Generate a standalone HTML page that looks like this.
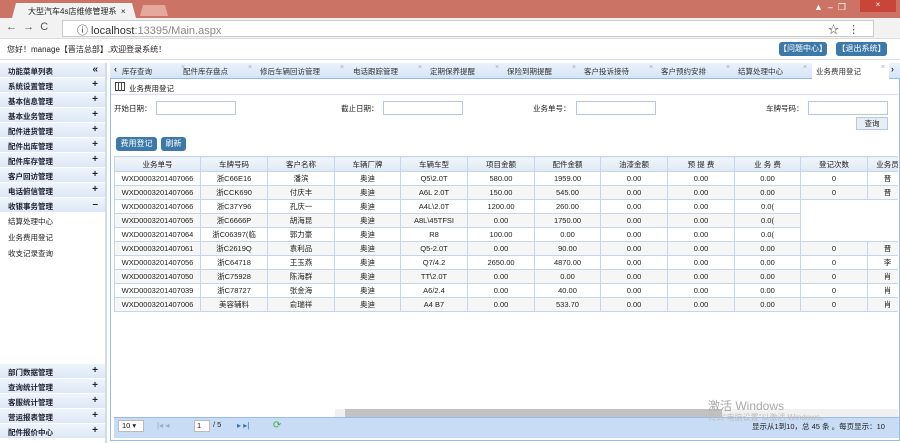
<!DOCTYPE html>
<html><head><meta charset="utf-8"><style>
*{margin:0;padding:0;box-sizing:border-box}
body{width:900px;height:443px;overflow:hidden;background:#fff;font-family:"Liberation Sans","Noto Sans CJK SC",sans-serif;font-size:8px;color:#222;position:relative}
.abs{position:absolute}
.top{left:0;top:0;width:900px;height:18px;background:#cb7364}
.tab{left:12px;top:3px;width:124px;height:15px;background:#f2f2f2;clip-path:polygon(4px 0,120px 0,124px 15px,0 15px);font-size:8px;padding:3px 0 0 16px}
.tab2{left:140px;top:5px;width:28px;height:11px;background:#e4a89c;clip-path:polygon(3px 0,25px 0,28px 11px,0 11px)}
.addr{left:0;top:18px;width:900px;height:21px;background:#f2f2f2;border-bottom:1px solid #ddd}
.url{left:62px;top:20px;width:812px;height:17px;background:#fff;border:1px solid #ccc;font-size:11px;padding:1px 0 0 14px;color:#333}
.hdr{left:0;top:40px;width:900px;height:20px;border-bottom:1px solid #ddd}
.btn{background:#3d79a8;color:#fff;border-radius:3px;font-size:8px;text-align:center;line-height:13px;height:14px}
.side{left:0;top:63px;width:107px;height:380px;border-right:2px solid #cfdcec}
.si{height:15px;background:linear-gradient(#eef4fc,#dce8f6);border-bottom:1px solid #fff;font-size:7.5px;padding:3px 0 0 8px;color:#223;position:relative;font-weight:bold}
.si b{position:absolute;right:7px;top:1px;font-size:10px}
.lk{height:16px;font-size:7.5px;padding:2px 0 0 8px}
.main{left:110px;top:63px;width:790px;height:378px;border:1px solid #99bbe8}
.tabs{left:110px;top:63px;width:790px;height:16px;background:linear-gradient(#eaf2fc,#d5e4f6);border-bottom:1px solid #99bbe8}
.t{position:absolute;top:3px;font-size:7.5px;color:#333}
.t i{font-style:normal;color:#aaa;position:absolute;top:-2px;font-size:7px}
table{border-collapse:collapse;position:absolute;left:114px;top:156px;font-size:7.5px;table-layout:fixed;width:793px}
td,th{border:1px solid #c5d5ea;height:14px;text-align:center;font-weight:normal;padding:0;white-space:nowrap;overflow:hidden}
th{background:linear-gradient(#f2f6fb,#dde8f5);height:15px}
tr:nth-child(odd) td{background:#f6f6f6}
input{position:absolute;height:14px;border:1px solid #b5c8e0}
.lbl{position:absolute;font-size:7.5px}
</style></head><body>
<div class="abs top"></div>
<div class="abs tab">大型汽车4s店维修管理系 &nbsp;×</div>
<div class="abs tab2"></div>
<div class="abs" style="left:814px;top:2px;font-size:9px;color:#fff">▲ &nbsp;– &nbsp;❐</div>
<div class="abs" style="left:860px;top:0;width:36px;height:12px;background:#c9453a;color:#fff;text-align:center;font-size:8px">×</div>
<div class="abs addr"></div>
<div class="abs" style="left:6px;top:21px;font-size:11px;color:#555">← &nbsp;→ &nbsp;C</div>
<div class="abs url">ⓘ localhost<span style="color:#888">:13395/Main.aspx</span></div>
<div class="abs" style="left:828px;top:21px;font-size:11px;color:#555">☆ &nbsp; ⋮</div>
<div class="abs hdr"></div>
<div class="abs" style="left:7px;top:44px;font-size:8px">您好！manage【晋洁总部】,欢迎登录系统！</div>
<div class="abs btn" style="left:779px;top:42px;width:48px">【问题中心】</div>
<div class="abs btn" style="left:836px;top:42px;width:51px">【退出系统】</div>

<div class="abs side">
<div class="si">功能菜单列表<b>«</b></div>
<div class="si">系统设置管理<b>+</b></div>
<div class="si">基本信息管理<b>+</b></div>
<div class="si">基本业务管理<b>+</b></div>
<div class="si">配件进货管理<b>+</b></div>
<div class="si">配件出库管理<b>+</b></div>
<div class="si">配件库存管理<b>+</b></div>
<div class="si">客户回访管理<b>+</b></div>
<div class="si">电话俯信管理<b>+</b></div>
<div class="si">收银事务管理<b>–</b></div>
<div class="lk" style="margin-top:1px">结算处理中心</div>
<div class="lk">业务费用登记</div>
<div class="lk">收支记录查询</div>
<div style="position:absolute;top:301px;width:105px">
<div class="si">部门数据管理<b>+</b></div>
<div class="si">查询统计管理<b>+</b></div>
<div class="si">客服统计管理<b>+</b></div>
<div class="si">营运报表管理<b>+</b></div>
<div class="si">配件报价中心<b>+</b></div>
</div></div>

<div class="abs main"></div>
<div class="abs tabs">
<span class="t" style="left:4px;font-weight:bold;font-size:9px;top:1px">‹</span>
<span class="t" style="left:12px">库存查询<i style="left:59px">×</i></span>
<span class="t" style="left:73px">配件库存盘点<i style="left:65px">×</i></span>
<span class="t" style="left:150px">修后车辆回访管理<i style="left:80px">×</i></span>
<span class="t" style="left:243px">电话跟踪管理<i style="left:65px">×</i></span>
<span class="t" style="left:320px">定期保养提醒<i style="left:65px">×</i></span>
<span class="t" style="left:397px">保险到期提醒<i style="left:65px">×</i></span>
<span class="t" style="left:474px">客户投诉接待<i style="left:65px">×</i></span>
<span class="t" style="left:551px">客户预约安排<i style="left:65px">×</i></span>
<span class="t" style="left:628px">结算处理中心<i style="left:65px">×</i></span>
<div style="position:absolute;left:702px;top:0;width:77px;height:16px;background:#fff"></div>
<span class="t" style="left:706px">业务费用登记<i style="left:65px">×</i></span>
<span class="t" style="left:781px;font-weight:bold;font-size:9px;top:1px">›</span>
</div>
<div class="abs" style="left:111px;top:80px;width:788px;height:15px;border-bottom:1px solid #dde"></div>
<div class="abs" style="left:115px;top:82px;width:10px;height:9px;border:1px solid #444;background:repeating-linear-gradient(90deg,transparent 0 2px,#444 2px 3px)"></div>
<div class="lbl" style="left:129px;top:83px">业务费用登记</div>
<div class="lbl" style="left:114px;top:103px">开始日期：</div><input style="left:156px;top:101px;width:80px">
<div class="lbl" style="left:341px;top:103px">截止日期：</div><input style="left:383px;top:101px;width:80px">
<div class="lbl" style="left:533px;top:103px">业务单号：</div><input style="left:576px;top:101px;width:80px">
<div class="lbl" style="left:766px;top:103px">车牌号码：</div><input style="left:808px;top:101px;width:80px">
<div class="abs" style="left:856px;top:117px;width:32px;height:13px;background:#e8eef6;border:1px solid #b5c8e0;font-size:7.5px;text-align:center;line-height:11px">查询</div>
<div class="abs btn" style="left:116px;top:137px;width:41px">费用登记</div>
<div class="abs btn" style="left:161px;top:137px;width:25px">刷新</div>

<div class="abs" style="left:114px;top:156px;width:784px;height:160px;overflow:hidden">
<table style="left:0;top:0">
<colgroup><col style="width:86px"><col style="width:67px"><col style="width:67px"><col style="width:66px"><col style="width:67px"><col style="width:67px"><col style="width:66px"><col style="width:67px"><col style="width:67px"><col style="width:66px"><col style="width:67px"><col style="width:40px"></colgroup>
<tr><th>业务单号</th><th>车牌号码</th><th>客户名称</th><th>车辆厂牌</th><th>车辆车型</th><th>项目金额</th><th>配件金额</th><th>油漆金额</th><th>预 提 费</th><th>业 务 费</th><th>登记次数</th><th>业务员</th></tr>
<tr><td>WXD0003201407066</td><td>浙C66E16</td><td>潘滨</td><td>奥迪</td><td>Q5\2.0T</td><td>580.00</td><td>1959.00</td><td>0.00</td><td>0.00</td><td>0.00</td><td>0</td><td>晋</td></tr>
<tr><td>WXD0003201407066</td><td>浙CCK690</td><td>付庆丰</td><td>奥迪</td><td>A6L 2.0T</td><td>150.00</td><td>545.00</td><td>0.00</td><td>0.00</td><td>0.00</td><td>0</td><td>晋</td></tr>
<tr><td>WXD0003201407066</td><td>浙C37Y96</td><td>孔庆一</td><td>奥迪</td><td>A4L\2.0T</td><td>1200.00</td><td>260.00</td><td>0.00</td><td>0.00</td><td>0.0(</td><td style="border:none;background:#fff"></td><td style="border:none;background:#fff"></td></tr>
<tr><td>WXD0003201407065</td><td>浙C6666P</td><td>胡海昆</td><td>奥迪</td><td>A8L\45TFSI</td><td>0.00</td><td>1750.00</td><td>0.00</td><td>0.00</td><td>0.0(</td><td style="border:none;background:#fff"></td><td style="border:none;background:#fff"></td></tr>
<tr><td>WXD0003201407064</td><td>浙C06397(临</td><td>郭力豪</td><td>奥迪</td><td>R8</td><td>100.00</td><td>0.00</td><td>0.00</td><td>0.00</td><td>0.0(</td><td style="border:none;background:#fff"></td><td style="border:none;background:#fff"></td></tr>
<tr><td>WXD0003201407061</td><td>浙C2619Q</td><td>袁利品</td><td>奥迪</td><td>Q5-2.0T</td><td>0.00</td><td>90.00</td><td>0.00</td><td>0.00</td><td>0.00</td><td>0</td><td>晋</td></tr>
<tr><td>WXD0003201407056</td><td>浙C64718</td><td>王玉燕</td><td>奥迪</td><td>Q7/4.2</td><td>2650.00</td><td>4870.00</td><td>0.00</td><td>0.00</td><td>0.00</td><td>0</td><td>李</td></tr>
<tr><td>WXD0003201407050</td><td>浙C75928</td><td>陈海群</td><td>奥迪</td><td>TT\2.0T</td><td>0.00</td><td>0.00</td><td>0.00</td><td>0.00</td><td>0.00</td><td>0</td><td>肖</td></tr>
<tr><td>WXD0003201407039</td><td>浙C78727</td><td>张金海</td><td>奥迪</td><td>A6/2.4</td><td>0.00</td><td>40.00</td><td>0.00</td><td>0.00</td><td>0.00</td><td>0</td><td>肖</td></tr>
<tr><td>WXD0003201407006</td><td>美容辅料</td><td>俞瑞祥</td><td>奥迪</td><td>A4 B7</td><td>0.00</td><td>533.70</td><td>0.00</td><td>0.00</td><td>0.00</td><td>0</td><td>肖</td></tr>
</table></div>

<div class="abs" style="left:335px;top:409px;width:563px;height:8px;background:#f0f0f0"></div>
<div class="abs" style="left:345px;top:409px;width:377px;height:8px;background:#c2c2c2"></div>
<div class="abs" style="left:114px;top:417px;width:785px;height:21px;background:#c9dcf5;border-top:1px solid #99bbe8"></div>
<div class="abs" style="left:118px;top:420px;width:26px;height:12px;background:#fff;border:1px solid #bbb;font-size:7.5px;padding-left:3px">10 ▾</div>
<div class="abs" style="left:157px;top:421px;font-size:8px;color:#9ab">|◂ ◂</div>
<div class="abs" style="left:194px;top:420px;width:16px;height:12px;background:#fff;border:1px solid #bbb;font-size:7.5px;padding-left:2px">1</div>
<div class="abs" style="left:213px;top:420px;font-size:7.5px">/ 5</div>
<div class="abs" style="left:237px;top:421px;font-size:8px;color:#37a">▸ ▸|</div>
<div class="abs" style="left:273px;top:420px;font-size:10px;color:#4a4">⟳</div>
<div class="abs" style="left:752px;top:421px;font-size:7.5px">显示从1到10，总 45 条 。每页显示：10</div>
<div class="abs" style="left:708px;top:397px;font-size:12px;color:#aaa">激活 Windows</div>
<div class="abs" style="left:708px;top:412px;font-size:8px;color:#bbb">转到“电脑设置”以激活 Windows。</div>
</body></html>
